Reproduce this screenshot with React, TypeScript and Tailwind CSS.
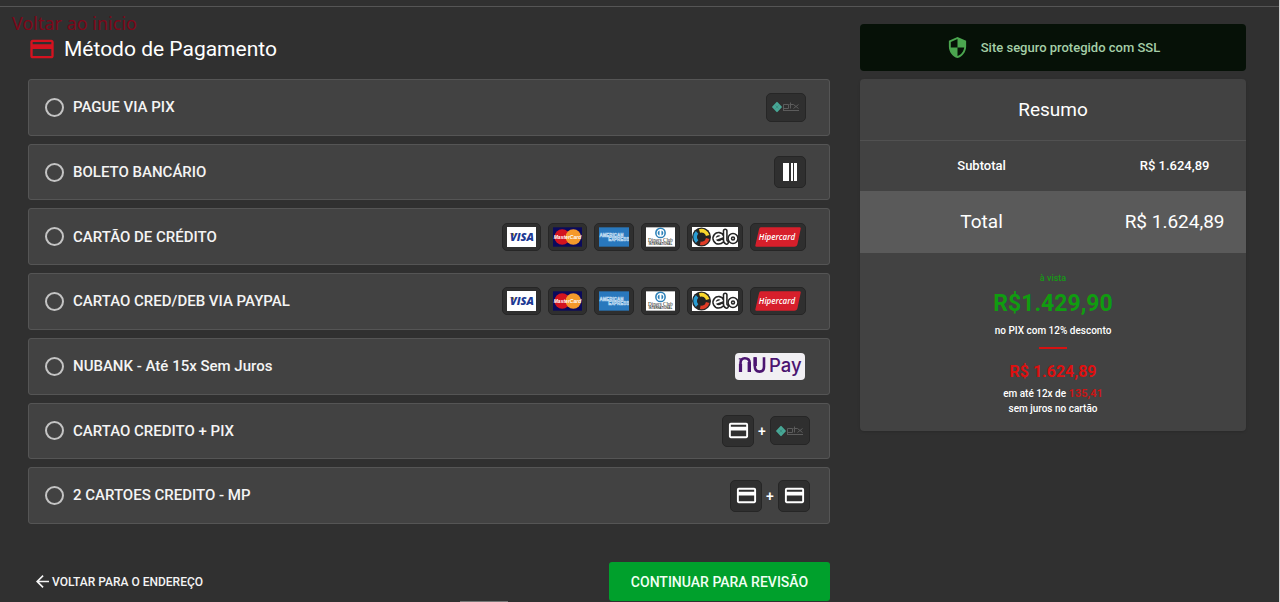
import type { ReactNode } from "react";

function CardIcon({ className }: { className: string }) {
  return (
    <svg viewBox="0 0 24 24" className={className} fill="currentColor" aria-hidden="true">
      <path d="M20 4H4c-1.110 0-1.990.89-1.990 2L2 18c0 1.110.89 2 2 2h16c1.110 0 2-.89 2-2V6c0-1.110-.89-2-2-2zm0 14H4v-6h16v6zm0-10H4V6h16v2z" />
    </svg>
  );
}

function ShieldIcon() {
  return (
    <svg viewBox="0 0 24 24" className="size-[23px] text-[#4ba64f]" fill="currentColor" aria-hidden="true">
      <path d="M12 1L3 5v6c0 5.550 3.840 10.740 9 12 5.160-1.260 9-6.450 9-12V5l-9-4zm0 10.990h7c-.53 4.120-3.280 7.790-7 8.940V12H5V6.300l7-3.110v8.800z" />
    </svg>
  );
}

function BackArrow() {
  return (
    <svg viewBox="4 4 16 16" className="size-[13px]" fill="currentColor" aria-hidden="true">
      <path d="M20 11H7.830l5.590-5.590L12 4l-8 8 8 8 1.410-1.410L7.830 13H20v-2z" />
    </svg>
  );
}

function Chip({ children, className }: { children: ReactNode; className: string }) {
  return (
    <span
      className={`flex items-center justify-center rounded-[5px] border border-[#262626] bg-[#2f2f2f] ${className}`}
    >
      {children}
    </span>
  );
}

function PixChip() {
  return (
    <Chip className="h-[29px] w-10">
      <svg viewBox="0 0 28 12" className="h-3 w-7" aria-label="pix" role="img">
        <path d="M5 1.800 9 6 5 10.200 1 6Z" fill="#48a796" stroke="#48a796" strokeWidth="1.800" strokeLinejoin="round" />
        <path d="M3.500 4.400 5 6 6.500 4.400M3.500 7.600 5 6 6.500 7.600" fill="none" stroke="#37877a" strokeWidth=".7" />
        <g fill="none" stroke="#5c5c5c" strokeWidth="1">
          <path d="M11.500 10V3.500h5v4h-5M18.500 1.500v6M17.500 3.500h4M21.500 3.500l5 4M26.500 3.500l-5 4M11 9.500h16" />
        </g>
      </svg>
    </Chip>
  );
}

function BoletoChip() {
  return (
    <Chip className="size-8">
      <svg viewBox="0 0 14 18" className="h-[18px] w-3.5" fill="#fff" role="img" aria-label="Boleto">
        <path d="M0 0h6v18H0zM8 0h2v18H8zM11 0h3v18h-3z" />
      </svg>
    </Chip>
  );
}

function CardChip() {
  return (
    <Chip className="size-8">
      <CardIcon className="size-[23px] text-white" />
    </Chip>
  );
}

function Visa() {
  return (
    <svg viewBox="0 0 29 20" className="h-5 w-[29px]" role="img" aria-label="Visa">
      <path fill="#fff" d="M0 0h29v20H0z" />
      <path fill="#e9a01c" d="M2.500 6h4l1 3.500Z" />
      <text x="15" y="14.200" textAnchor="middle" fontFamily="Open Sans, sans-serif" fontWeight="800" fontStyle="italic" fontSize="11" fill="#1d3a94">VISA</text>
    </svg>
  );
}

function MasterCard() {
  return (
    <svg viewBox="0 0 30 20" className="h-5 w-[29px]" role="img" aria-label="MasterCard">
      <path fill="#0b0a5c" d="M0 0h30v20H0z" />
      <circle cx="9.500" cy="10" r="8" fill="#d3131f" />
      <circle cx="21" cy="10" r="8" fill="#f5992b" />
      <text x="15" y="12.300" textAnchor="middle" fontFamily="Liberation Sans, sans-serif" fontWeight="700" fontStyle="italic" fontSize="5.200" fill="#fff">MasterCard</text>
    </svg>
  );
}

function Amex() {
  return (
    <svg viewBox="0 0 31 20" className="h-5 w-[30px]" role="img" aria-label="American Express">
      <path fill="#2978bd" d="M0 0h31v20H0z" />
      <g fontFamily="Liberation Sans, sans-serif" fontWeight="700" fontSize="4.600" fill="#2978bd" stroke="#b9d7ef" strokeWidth=".55">
        <text x="0.500" y="9.500">AMERICAN</text>
        <text x="9.500" y="14.500">EXPRESS</text>
      </g>
    </svg>
  );
}

function Diners() {
  return (
    <svg viewBox="0 0 30 20" className="h-5 w-[29px]" role="img" aria-label="Diners Club International">
      <path fill="#fff" d="M0 0h30v20H0z" />
      <circle cx="15" cy="5.800" r="4.800" fill="#fff" stroke="#2c80b8" strokeWidth="1.600" />
      <path d="M14 3.200a2.700 2.700 0 0 0 0 5.200ZM16 3.200a2.700 2.700 0 0 1 0 5.200Z" fill="#2c80b8" />
      <text x="15" y="15.600" textAnchor="middle" fontFamily="Liberation Serif, serif" fontSize="5.300" fill="#222">Diners Club</text>
      <text x="15" y="18.400" textAnchor="middle" fontFamily="Liberation Sans, sans-serif" fontSize="3" fontWeight="700" fill="#333">INTERNATIONAL</text>
    </svg>
  );
}

function Elo() {
  return (
    <svg viewBox="0 0 46 20" className="h-5 w-[46px]" role="img" aria-label="Elo">
      <path fill="#fff" d="M0 0h46v20H0z" />
      <circle cx="9.500" cy="10" r="9.500" fill="#242424" />
      <g fill="none" strokeWidth="3.600">
        <path d="M7.500 4A6.400 6.400 0 0 1 15.700 8.500" stroke="#f9d72c" />
        <path d="M15.700 11.500A6.400 6.400 0 0 1 8.300 16.300" stroke="#df3c27" />
        <path d="M5.100 14.600A6.400 6.400 0 0 1 5.100 5.400" stroke="#289bd1" />
      </g>
      <g fill="none" strokeLinecap="round" strokeLinejoin="round">
        <g stroke="#252525" strokeWidth="5">
          <path d="M23 12.200l7-2.700c-1-2.500-4.500-3-6.300-.8-2.300 2.800-.2 6.600 3 6.600 1.500 0 2.500-.5 3.300-1.400M33.200 4v9c0 1.500.4 2 1.400 2.400" />
          <circle cx="41" cy="11.500" r="3.200" />
        </g>
        <g stroke="#fff" strokeWidth="1.900">
          <path d="M23 12.200l7-2.700c-1-2.500-4.500-3-6.300-.8-2.300 2.800-.2 6.600 3 6.600 1.500 0 2.500-.5 3.300-1.400M33.200 4v9c0 1.500.4 2 1.400 2.400" />
          <circle cx="41" cy="11.500" r="3.200" />
        </g>
      </g>
    </svg>
  );
}

function Hipercard() {
  return (
    <svg viewBox="0 0 47 20" className="h-5 w-[46px]" role="img" aria-label="Hipercard">
      <path d="M6 0h39.500q1.500 0 1.200 1.500L43.500 17q-.6 3-3.500 3H1.500Q0 20 .4 18.500L4 2.500Q4.500 0 6 0Z" fill="#d71f2b" />
      <text x="22.500" y="12.800" textAnchor="middle" fontFamily="Open Sans, sans-serif" fontStyle="italic" fontWeight="600" fontSize="8.200" fill="#fff">Hipercard</text>
    </svg>
  );
}

function NuPay() {
  return (
    <svg viewBox="0 0 70 27" className="mr-[5px] h-[27px] w-[70px] rounded-[4px] bg-[#f1eff3]" role="img" aria-label="NuPay">
      <g fill="none" stroke="#4b1470">
        <path d="M4.800 6.500V5.200" strokeWidth="2" />
        <path d="M5.500 19V10c0-3 1.500-4.800 4.300-4.800 3.300 0 4.900 2 4.900 5V19" strokeWidth="2.600" />
        <path d="M19.800 4.300V13c0 4 1.500 5.600 4.700 5.600 3 0 4.500-1.800 4.500-4.800V4.300" strokeWidth="2.600" />
        <path d="M5.500 19V11M14.200 19V9M20.300 13V4.300" strokeWidth="3.200" />
      </g>
      <text x="34" y="19" fontFamily="Inter, sans-serif" fontWeight="500" fontSize="18.500" fill="#4b1470">Pay</text>
    </svg>
  );
}

function Brands() {
  return (
    <div className="flex items-center gap-[7px] pr-1">
      <Chip className="h-7 px-1"><Visa /></Chip>
      <Chip className="h-7 px-1"><MasterCard /></Chip>
      <Chip className="h-7 px-1"><Amex /></Chip>
      <Chip className="h-7 px-1"><Diners /></Chip>
      <Chip className="h-7 px-1"><Elo /></Chip>
      <Chip className="h-7 px-1"><Hipercard /></Chip>
    </div>
  );
}

const Plus = () => <span className="w-4 text-center text-sm font-medium">+</span>;

const methods: { id: string; label: string; badge: ReactNode }[] = [
  { id: "pix", label: "PAGUE VIA PIX", badge: <div className="pr-1"><PixChip /></div> },
  { id: "boleto", label: "BOLETO BANCÁRIO", badge: <div className="pr-1"><BoletoChip /></div> },
  { id: "credito", label: "CARTÃO DE CRÉDITO", badge: <Brands /> },
  { id: "paypal", label: "CARTAO CRED/DEB VIA PAYPAL", badge: <Brands /> },
  { id: "nubank", label: "NUBANK - Até 15x Sem Juros", badge: <NuPay /> },
  { id: "credito-pix", label: "CARTAO CREDITO + PIX", badge: <><CardChip /><Plus /><PixChip /></> },
  { id: "dois-cartoes", label: "2 CARTOES CREDITO - MP", badge: <><CardChip /><Plus /><CardChip /></> },
];

export default function App() {
  return (
    <div className="relative flex min-h-screen flex-col border-r border-r-[#d0d0d0] bg-[#303030] font-[Roboto,sans-serif] text-white">
      <div className="h-[7px] border-b border-[#555]" />
      <a href="#inicio" className="absolute top-[11px] left-3 font-['Noto_Sans',sans-serif] text-lg leading-6 text-[#7d0719]">
        Voltar ao inicio
      </a>
      <div className="flex items-start gap-[30px] pr-[33px] pl-7">
        <main className="min-w-0 flex-1 pt-7">
          <h1 className="flex items-center gap-2 text-[21px] leading-7">
            <CardIcon className="size-7 text-[#d5121f]" />
            Método de Pagamento
          </h1>
          <form>
            <div className="mt-4 grid min-h-[445px] auto-rows-fr gap-2">
              {methods.map((m) => (
                <label
                  key={m.id}
                  htmlFor={m.id}
                  className="flex items-center rounded-[3px] border border-[#555] bg-[#424242] pr-[19px] pl-4"
                >
                  <input
                    id={m.id}
                    type="radio"
                    name="metodo"
                    className="size-[19px] appearance-none rounded-full border-2 border-[#c4c4c4] checked:bg-[#e30f1c]"
                  />
                  <span className="ml-[9px] flex-1 text-[15px] font-medium text-[#f4f4f4]">{m.label}</span>
                  <span className="flex items-center">{m.badge}</span>
                </label>
              ))}
            </div>
            <div className="mt-[38px] flex items-center justify-between pl-2">
              <a href="#endereco" className="flex items-center gap-[3px] text-xs font-medium text-[#f4f4f4]">
                <BackArrow />
                VOLTAR PARA O ENDEREÇO
              </a>
              <button type="button" className="h-[39px] w-[221px] rounded-[3px] bg-[#00a02c] text-sm font-medium text-[#f0fff3]">
                CONTINUAR PARA REVISÃO
              </button>
            </div>
          </form>
        </main>
        <aside className="w-[386px] shrink-0 pt-[17px]">
          <div className="flex h-[47px] items-center justify-center gap-3 rounded-[4px] bg-[#061107] text-[13px] font-medium text-[#a5cfa7]">
            <ShieldIcon />
            Site seguro protegido com SSL
          </div>
          <section className="mt-2 overflow-hidden rounded-[4px] bg-[#424242] pb-[15px] shadow">
            <h2 className="border-b border-[#515151] text-center text-[19px] leading-[61px]">Resumo</h2>
            <table className="w-full table-fixed text-center">
              <tbody>
                <tr className="h-[50px] text-[13px]">
                  <th scope="row" className="w-[63%] font-medium">Subtotal</th>
                  <td className="font-medium">R$ 1.624,89</td>
                </tr>
                <tr className="h-[62px] bg-[#5a5a5a] text-[19px]">
                  <th scope="row" className="font-normal">Total</th>
                  <td>R$ 1.624,89</td>
                </tr>
              </tbody>
            </table>
            <div className="flex flex-col items-center pt-[18px] text-[10px] leading-[15px] font-medium">
              <p className="text-[9px] text-[#159a15]">à vista</p>
              <p className="text-[23px] leading-9 font-bold text-[#109c10]">R$1.429,90</p>
              <p className="leading-[18px]">no PIX com 12% desconto</p>
              <hr className="mt-[7px] mb-[10px] w-7 border-t-2 border-[#d61212]" />
              <p className="text-base leading-[25px] font-bold text-[#de1010]">R$ 1.624,89</p>
              <p className="pt-[2px]">
                em até 12x de <span className="text-[11px] font-bold text-[#c91616]">135,41</span>
              </p>
              <p>sem juros no cartão</p>
            </div>
          </section>
        </aside>
      </div>
      <div className="absolute bottom-0 left-[460px] h-px w-12 bg-[#777]" />
    </div>
  );
}
